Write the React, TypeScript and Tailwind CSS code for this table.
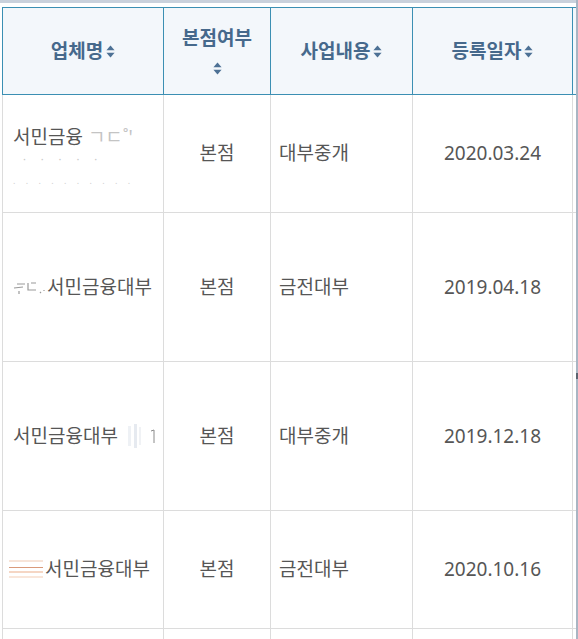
import React from 'react';

type Row = {
  name: React.ReactNode;
  branch: string;
  business: string;
  date: string;
  height: string;
};

const SortIcon = () => (
  <svg width="9" height="13" viewBox="0 0 9 13" className="inline-block shrink-0">
    <path d="M4.5 0.5 L8.6 5.2 L0.4 5.2 Z" fill="#4d7195" />
    <path d="M4.5 12.5 L8.6 7.8 L0.4 7.8 Z" fill="#4d7195" />
  </svg>
);

// faint leftovers of the blurred-out parts of the names
const Smudge1 = () => (
  <div className="leading-[22px] pt-[10px]">
    <div className="whitespace-nowrap">
      서민금융{' '}
      <span className="text-[#c4c4c4]">ㄱㄷ˚'</span>
    </div>
    <div className="text-[#c8c8c8] text-[11px] tracking-[6px] pl-[10px]">· ·  · ·  ·</div>
    <div className="text-[#cfcfcf] text-[9px] tracking-[4px]">. . . . . . .  . . .</div>
  </div>
);

const Smudge2 = () => (
  <span className="inline-flex items-center whitespace-nowrap -ml-[2px]">
    <svg width="36" height="16" viewBox="0 0 36 16">
      <path d="M3 9 L12 8 M6 5 L14 5 M8 12 L8 15 M17 4 L17 11 L25 11 M20 4 L25 4 M29 13 L30 14 M33 11 L33 12" stroke="#9a9a9a" strokeWidth="1.2" fill="none" />
    </svg>
    서민금융대부
  </span>
);

const Smudge3 = () => (
  <span className="inline-flex items-center whitespace-nowrap">
    서민금융대부
    <svg width="36" height="24" viewBox="0 0 36 24" className="ml-[6px]">
      <rect x="4" y="2" width="3" height="20" fill="#eef1f5" />
      <rect x="10" y="0" width="3" height="24" fill="#e6eaf0" />
      <rect x="15" y="3" width="2" height="18" fill="#f0f2f5" />
      <path d="M27 7 L30 6 L30 19" stroke="#8a8a8a" strokeWidth="1" fill="none" />
    </svg>
  </span>
);

const Smudge4 = () => (
  <span className="inline-flex items-center whitespace-nowrap -ml-[4px]">
    <svg width="36" height="24" viewBox="0 0 36 24">
      <rect x="0" y="2" width="34" height="2" fill="#f7e4d8" />
      <rect x="0" y="9" width="34" height="1" fill="#d99a7a" />
      <rect x="0" y="13" width="34" height="2" fill="#f5d6c4" />
      <rect x="0" y="18" width="34" height="2" fill="#f9e6da" />
    </svg>
    서민금융대부
  </span>
);

const rows: Row[] = [
  { name: <Smudge1 />, branch: '본점', business: '대부중개', date: '2020.03.24', height: 'h-[118px]' },
  { name: <Smudge2 />, branch: '본점', business: '금전대부', date: '2019.04.18', height: 'h-[149px]' },
  { name: <Smudge3 />, branch: '본점', business: '대부중개', date: '2019.12.18', height: 'h-[149px]' },
  { name: <Smudge4 />, branch: '본점', business: '금전대부', date: '2020.10.16', height: 'h-[118px]' },
];

function App() {
  return (
    <div
      className="w-[578px] h-[639px] overflow-hidden bg-white flex"
      style={{ fontFamily: '"Noto Sans", "Noto Sans CJK KR", sans-serif' }}
    >
      <div className="flex-1 flex flex-col">
        <div className="h-[3px] shrink-0 bg-[#c9d1dc]" />
        <div className="h-[4px] shrink-0" />

        <div className="pl-[2px] shrink-0">
          {/* header */}
          <div className="flex h-[88px] border-y border-[#3b8fb3] bg-[#f3f7fb] text-[#46698c] text-[19px] font-bold">
            <div className="w-[162px] shrink-0 border-x border-[#3b8fb3] flex items-center justify-center gap-[3px]">
              업체명 <SortIcon />
            </div>
            <div className="w-[107px] shrink-0 border-r border-[#3b8fb3] flex flex-col items-center justify-center gap-[13px] leading-[22px]">
              <span>본점여부</span>
              <SortIcon />
            </div>
            <div className="w-[142px] shrink-0 border-r border-[#3b8fb3] flex items-center justify-center gap-[3px]">
              사업내용 <SortIcon />
            </div>
            <div className="w-[160px] shrink-0 border-r border-[#3b8fb3] flex items-center justify-center gap-[3px]">
              등록일자 <SortIcon />
            </div>
            <div className="flex-1" />
          </div>

          {/* body */}
          {rows.map((r, i) => (
            <div key={i} className={`flex ${r.height} border-b border-[#dcdcdc] text-[19px] text-[#565656]`}>
              <div className="w-[162px] shrink-0 border-x border-[#dcdcdc] flex items-center pl-[10px] pr-[2px]">
                {r.name}
              </div>
              <div className="w-[107px] shrink-0 border-r border-[#dcdcdc] flex items-center justify-center">
                {r.branch}
              </div>
              <div className="w-[142px] shrink-0 border-r border-[#dcdcdc] flex items-center pl-[8px]">
                {r.business}
              </div>
              <div className="w-[160px] shrink-0 border-r border-[#dcdcdc] flex items-center justify-center">
                {r.date}
              </div>
              <div className="flex-1" />
            </div>
          ))}
          <div className="flex h-[40px]">
            <div className="w-[162px] shrink-0 border-x border-[#dcdcdc]" />
            <div className="w-[107px] shrink-0 border-r border-[#dcdcdc]" />
            <div className="w-[142px] shrink-0 border-r border-[#dcdcdc]" />
            <div className="w-[160px] shrink-0 border-r border-[#dcdcdc]" />
          </div>
        </div>
      </div>
      <div className="w-[2px] shrink-0 bg-[#a9b5c3] flex flex-col pt-[373px]">
        <div className="h-[6px] bg-[#5b6470]" />
      </div>
    </div>
  );
}

export default App;
